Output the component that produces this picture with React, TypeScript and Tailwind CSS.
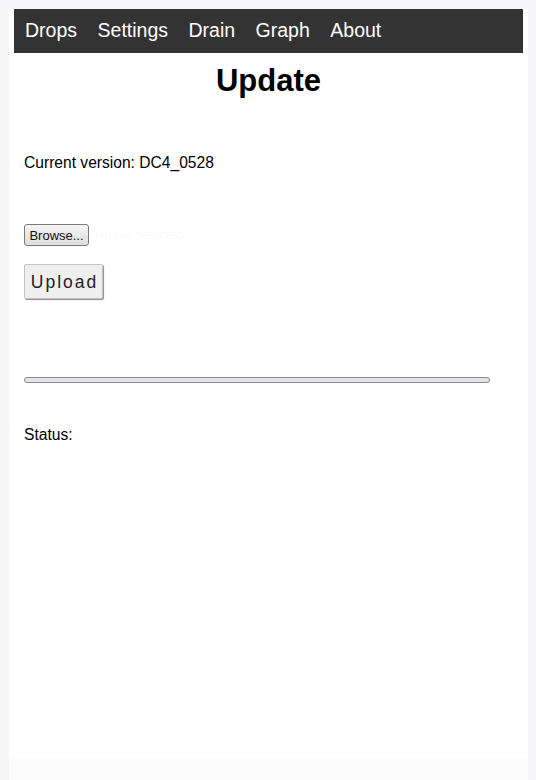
const links = ['Drops', 'Settings', 'Drain', 'Graph', 'About']

export default function App() {
  return (
    <div className="flex h-[780px] flex-col bg-[#f6f6f8] pl-[9px] pr-[8px] pt-[9px] font-['Liberation_Sans',Arial,sans-serif] text-black">
      <div className="flex flex-1 flex-col bg-white">
        <div className="flex flex-1 flex-col px-[5px]">
          <nav className="flex h-[44px] items-center gap-[20.5px] bg-[#333333] pl-[11px] text-[19.5px] text-white">
            {links.map(link => (
              <a key={link} href="#" className="leading-none">{link}</a>
            ))}
          </nav>

          <h1 className="mt-[10px] text-center text-[31px] font-bold leading-[normal]">Update</h1>

          <div className="flex flex-col px-[10px]">
            <p className="mt-[55px] text-[15.6px] leading-[normal]">Current version: DC4_0528</p>

            <div className="mt-[52px] flex items-center">
              <button
                type="button"
                className="h-[22px] w-[65px] rounded-[3px] border border-[#7a7a7a] bg-gradient-to-b from-[#f4f4f4] to-[#dedede] text-[13px] leading-none text-[#111]"
              >
                Browse...
              </button>
              <span className="ml-[6px] text-[13px] text-[#fbfbfb]">No file selected.</span>
            </div>

            <div className="mt-[18px] flex">
              <button
                type="button"
                className="h-[35px] w-[79px] rounded-[2px] border border-[#c4c4c4] bg-[#efefef] pl-[2px] pt-[2px] text-[17.5px] leading-none tracking-[2px] text-[#222] shadow-[1px_1px_1px_#8c8c8c]"
              >
                Upload
              </button>
            </div>

            <div className="mt-[78px] h-[6px] w-[466px] rounded-full border border-[#8a8a8a] bg-[#e4e4ea]" />

            <p className="mt-[43px] text-[15.6px] leading-[normal]">Status:</p>
          </div>
        </div>
        <div className="h-[22px] bg-[#fcfcfc]" />
      </div>
    </div>
  )
}
